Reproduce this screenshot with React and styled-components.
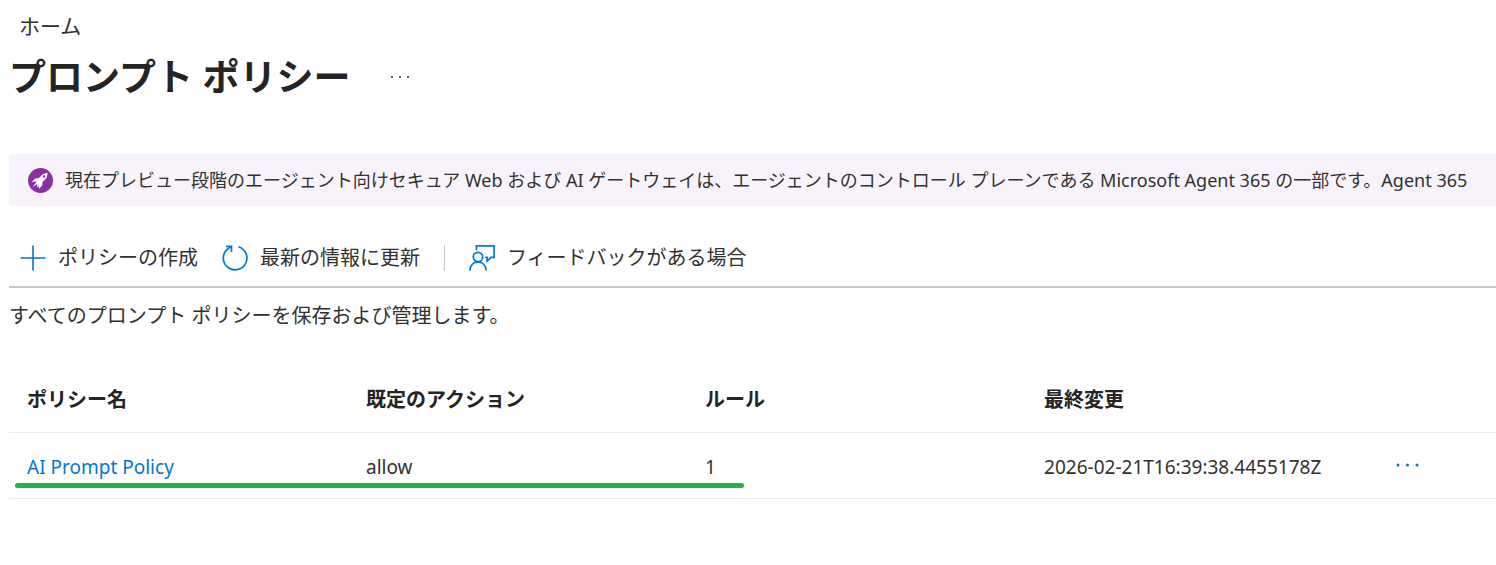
import React from 'react'
import styled, { createGlobalStyle } from 'styled-components'

const GlobalStyle = createGlobalStyle`
*{
    box-sizing: border-box;
}

body{
    margin: 0;
    background: #fff;
    color: #323130;
    font-family: "Noto Sans", "Noto Sans CJK JP", sans-serif;
    font-size: 20px;
    line-height: 28px;
    overflow-x: hidden;
}
`

const Page = styled.div`
padding: 12px 0 0 9px;
`

const Breadcrumb = styled.nav`
padding: 0 10px;
font-size: 21px;

a{
    color: #323130;
    text-decoration: none;
}
`

const TitleRow = styled.header`
display: flex;
align-items: center;
gap: 38px;
height: 74px;

h1{
    margin: 0;
    color: #242424;
    font-size: 37px;
    line-height: 48px;
    font-weight: 600;
}
`

const MoreButton = styled.button`
display: flex;
padding: 0;
border: none;
background: none;
color: ${props => props.$color};
cursor: pointer;
`

const Banner = styled.div`
display: flex;
align-items: center;
gap: 12px;
height: 52px;
margin-top: 40px;
padding-left: 19px;
border-radius: 3px 0 0 3px;
background: #f8f3fb;
font-size: 18px;
white-space: nowrap;
overflow: hidden;

svg{
    flex: none;
}
`

const Toolbar = styled.div`
display: flex;
align-items: center;
gap: 24px;
height: 82px;
padding: 24px 0 0 11px;
border-bottom: 2px solid #c8c8c8;
`

const ToolButton = styled.button`
display: flex;
align-items: center;
gap: 12px;
padding: 0;
border: none;
background: none;
color: #323130;
font: inherit;
cursor: pointer;

svg{
    color: #0078d4;
}
`

const Separator = styled.span`
width: 1px;
height: 26px;
background: #c8c6c4;
`

const Description = styled.p`
margin: 14px 0 0;
`

const TableArea = styled.div`
position: relative;
margin-top: 36px;
`

const Table = styled.table`
width: 100%;
table-layout: fixed;
border-collapse: collapse;

th, td{
    height: 66px;
    padding: 2px 18px 0;
    border-bottom: 1px solid #edebe9;
    text-align: left;
    white-space: nowrap;
}

th{
    color: #242424;
    font-weight: 600;
}

td{
    padding-top: 4px;
    font-size: 19px;
}

a{
    color: #0078d4;
    text-decoration: none;
}
`

const Column = styled.col`
width: ${props => props.$width};
`

const ActionCell = styled.td`
&&{
    padding: 0 30px;
}
`

const Underline = styled.div`
position: absolute;
left: 6px;
bottom: 11px;
width: 49%;
height: 5px;
border-radius: 3px;
background: #22b14c;
`

const PlusIcon = () => (
    <svg width="26" height="26" viewBox="0 0 26 26" fill="none" stroke="currentColor" strokeWidth="1.6" aria-hidden="true">
        <path d="M13 0.5V25.5M0.5 13H25.5" />
    </svg>
)

const RefreshIcon = () => (
    <svg width="26" height="26" viewBox="0 0 26 26" fill="none" stroke="currentColor" strokeWidth="1.7" aria-hidden="true">
        <path d="M16.4 1.7A11.8 11.8 0 1 1 6.6 3.2L9.2 1.6" />
        <path d="M4 1.4H9.5V7" />
    </svg>
)

const FeedbackIcon = () => (
    <svg width="26" height="26" viewBox="0 0 26 26" fill="none" stroke="currentColor" strokeWidth="1.7" aria-hidden="true">
        <path d="M7.4 5.2V0.9H25.1V12.3H22L18.1 16V12.3H16.2" />
        <circle cx="9" cy="12" r="4.7" />
        <path d="M0.9 25.5C0.9 20.4 4.4 16.8 9 16.8S17.1 20.4 17.1 25.5" />
    </svg>
)

const RocketIcon = () => (
    <svg width="25" height="25" viewBox="0 0 25 25" aria-hidden="true">
        <circle cx="12.5" cy="12.5" r="12.5" fill="#8731a5" />
        <path d="M19.4 5.1C16.6 5.3 14.3 6.4 12.4 8.4L10.7 10.3L7.2 10.5L3.8 14L7.3 13.6L8.2 14.2L4.7 18.9L9.3 16.1L9 20L10.4 17.5L11.2 20.8L14.3 17.2L14.5 14L16.6 12.1C18.7 10 19.7 7.9 19.4 5.1Z" fill="#fff" />
        <circle cx="16.1" cy="8.5" r="1.2" fill="#8731a5" />
    </svg>
)

const DotsIcon = ({ size, radius }) => (
    <svg width={size} height="6" viewBox={`0 0 ${size} 6`} fill="currentColor" aria-hidden="true">
        <circle cx="3" cy="3" r={radius} />
        <circle cx={size / 2} cy="3" r={radius} />
        <circle cx={size - 3} cy="3" r={radius} />
    </svg>
)

const policies = [
    { name: 'AI Prompt Policy', action: 'allow', rules: 1, modified: '2026-02-21T16:39:38.4455178Z' }
]

export default function App() {
  return (
    <>
    <GlobalStyle />
    <Page>
        <Breadcrumb>
            <a href="#home">ホーム</a>
        </Breadcrumb>
        <TitleRow>
            <h1>プロンプト ポリシー</h1>
            <MoreButton $color="#323130" aria-label="その他">
                <DotsIcon size={22} radius={1} />
            </MoreButton>
        </TitleRow>
        <Banner>
            <RocketIcon />
            <span>現在プレビュー段階のエージェント向けセキュア Web および AI ゲートウェイは、エージェントのコントロール プレーンである Microsoft Agent 365 の一部です。Agent 365</span>
        </Banner>
        <Toolbar>
            <ToolButton><PlusIcon />ポリシーの作成</ToolButton>
            <ToolButton><RefreshIcon />最新の情報に更新</ToolButton>
            <Separator />
            <ToolButton><FeedbackIcon />フィードバックがある場合</ToolButton>
        </Toolbar>
        <Description>すべてのプロンプト ポリシーを保存および管理します。</Description>
        <TableArea>
            <Table>
                <colgroup>
                    <Column $width="22.8%" />
                    <Column $width="22.8%" />
                    <Column $width="22.8%" />
                    <Column $width="22.8%" />
                    <Column />
                </colgroup>
                <thead>
                    <tr>
                        <th>ポリシー名</th>
                        <th>既定のアクション</th>
                        <th>ルール</th>
                        <th>最終変更</th>
                        <th aria-label="操作"></th>
                    </tr>
                </thead>
                <tbody>
                    {policies.map(item => (
                        <tr key={item.name}>
                            <td><a href="#policy">{item.name}</a></td>
                            <td>{item.action}</td>
                            <td>{item.rules}</td>
                            <td>{item.modified}</td>
                            <ActionCell>
                                <MoreButton $color="#0078d4" aria-label="その他の操作">
                                    <DotsIcon size={25} radius={1.5} />
                                </MoreButton>
                            </ActionCell>
                        </tr>
                    ))}
                </tbody>
            </Table>
            <Underline />
        </TableArea>
    </Page>
    </>
  )
}
